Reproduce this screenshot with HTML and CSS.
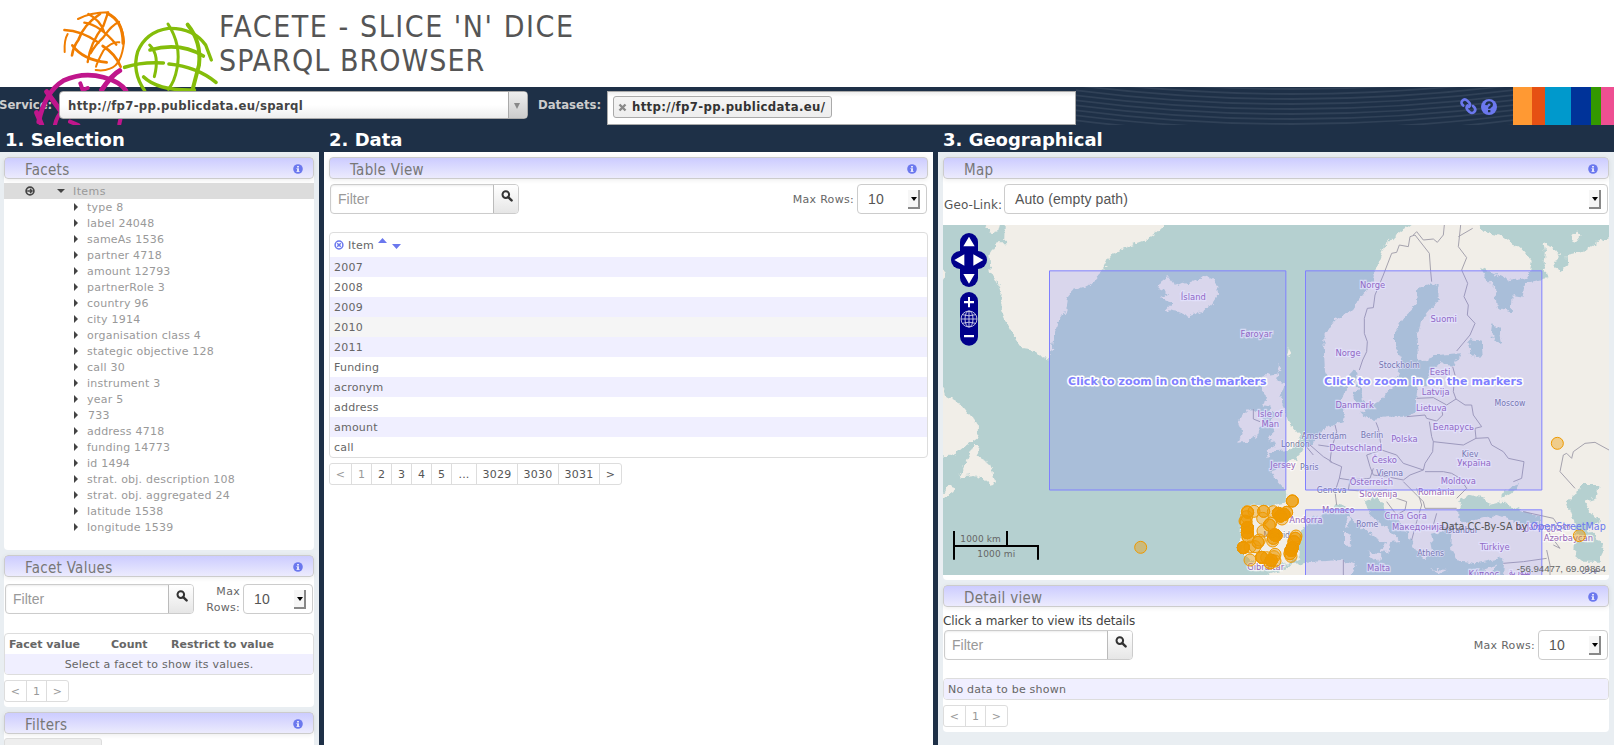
FILE: index.html
```html
<!DOCTYPE html>
<html lang="en">
<head>
<meta charset="utf-8">
<title>Facete</title>
<link rel="stylesheet" href="styles.css">
</head>
<body>
<svg width="0" height="0" class="defs">
  <symbol id="info" viewBox="0 0 10 10"><circle cx="5" cy="5" r="4.8" fill="#6b78ee"/><path d="M4 2h2v1.4H4zM3.4 4.2H6v3h.7v.9H3.4v-.9H4V5.1h-.6z" fill="#e3e3fc"/></symbol>
  <symbol id="search" viewBox="0 0 12 12"><circle cx="4.8" cy="4.6" r="3.3" fill="none" stroke="#333" stroke-width="2"/><path d="M7.2 7.2L10.6 10.4" stroke="#333" stroke-width="2.4" stroke-linecap="round"/></symbol>
</svg>
<header class="banner">
  <h1><span class="l1">FACETE - SLICE 'N' DICE</span><span class="l2">SPARQL BROWSER</span></h1>
</header>
<svg class="logo" viewBox="0 0 660 375" width="220" height="125" fill="none" stroke-linecap="round" stroke-linejoin="round">
  <g stroke="#f07d00">
    <path stroke-width="6" d="M174 57Q210 38 265 37M262 40Q308 62 312 125Q305 195 270 206Q250 214 227 210"/>
    <path stroke-width="9" d="M262 40Q310 62 309 130"/>
    <path stroke-width="8" d="M240 42Q190 75 175 120Q160 140 156 166"/>
    <path stroke-width="7" d="M250 78Q210 130 203 186M250 78L264 38M297 66Q275 75 250 112Q225 135 212 160M133 90Q185 92 236 128M193 68Q240 75 289 134M205 42Q240 60 252 95"/>
    <path stroke-width="8" d="M157 136Q190 180 260 187M248 138Q285 160 302 200"/>
    <path stroke-width="6" d="M298 127Q275 124 250 152Q232 185 228 200M143 102Q132 120 134 156"/>
  </g>
  <g stroke="#84bd0a">
    <path stroke-width="10" d="M374 272Q335 215 353 155Q378 95 445 85Q520 83 557 135L574 180"/>
    <path stroke-width="12" d="M503 74Q545 125 537 195L518 268"/>
    <path stroke-width="9" d="M444 72Q485 135 471 205Q464 245 445 268M389 135Q420 165 403 230"/>
    <path stroke-width="11" d="M314 202Q365 185 430 189M390 150Q480 125 550 168M447 192Q530 200 588 247M371 231Q415 273 523 270"/>
  </g>
  <g stroke="#c0168c">
    <path stroke-width="14" d="M56 366Q75 275 130 242Q190 215 250 232Q300 245 318 272"/>
    <path stroke-width="15" d="M299 212Q275 225 245 270M50 338L65 374M80 275L120 330"/>
    <path stroke-width="12" d="M181 250L188 270L203 264M105 374Q110 350 125 335M298 372L303 350M150 365L175 375"/>
  </g>
</svg>
<nav class="navbar">
  <label class="nl">Service:</label>
  <div class="combo"><span>http://fp7-pp.publicdata.eu/sparql</span><i><b></b></i></div>
  <label class="nl ds">Datasets:</label>
  <div class="multi"><span class="chip"><svg width="9" height="9" viewBox="0 0 9 9"><path d="M1.500 1.500l6 6M7.500 1.500l-6 6" stroke="#8a8a8a" stroke-width="2.400"/></svg>http://fp7-pp.publicdata.eu/</span></div>
  <div class="pattern">
    <svg class="waves" width="437" height="38" viewBox="0 0 437 38"><g id="waves" fill="none" stroke="#304157" stroke-width="1.8"></g></svg>
    <svg class="links" width="40" height="20" viewBox="0 0 40 20">
      <g fill="none" stroke="#6b78ee" stroke-width="2.600" stroke-linecap="round"><path d="M4.200 8.600Q1.200 6 3.400 3.600T8.200 3.600L10.200 5.600Q12 8 10 10"/><path d="M8.600 8.400Q6.600 10.400 8.400 12.800L10.600 15Q13 17 15.200 15T15.400 10.400L14 9"/></g>
      <circle cx="30" cy="10" r="8" fill="#6b78ee"/><path d="M27.300 8.100Q27.500 5.400 30.100 5.400T32.800 7.800Q32.800 9.100 31.400 9.800Q30.200 10.400 30.200 11.700M30.200 13.100V15.300" fill="none" stroke="#1e3047" stroke-width="2.400"/>
    </svg>
  </div>
  <div class="stripes"><i class="s1"></i><i class="s2"></i><i class="s3"></i><i class="s4"></i><i class="s5"></i><i class="s6"></i></div>
</nav>
<main class="cols">
  <section class="col left">
    <h2>1. Selection</h2>
    <div class="body">
      <div class="panel facets">
        <h3>Facets<svg><use href="#info"/></svg></h3>
        <div class="items"><svg width="10" height="10" viewBox="0 0 10 10"><circle cx="5" cy="5" r="3.900" fill="#ddd" stroke="#444" stroke-width="1.700"/><path d="M2.200 5h4.600M5 2.900L7.100 5L5 7.100" fill="none" stroke="#444" stroke-width="1.400"/></svg><b class="down"></b><span>Items</span></div>
        <ul><li>type 8</li><li>label 24048</li><li>sameAs 1536</li><li>partner 4718</li><li>amount 12793</li><li>partnerRole 3</li><li>country 96</li><li>city 1914</li><li>organisation class 4</li><li>stategic objective 128</li><li>call 30</li><li>instrument 3</li><li>year 5</li><li class="anon">733</li><li>address 4718</li><li>funding 14773</li><li>id 1494</li><li>strat. obj. description 108</li><li>strat. obj. aggregated 24</li><li>latitude 1538</li><li>longitude 1539</li></ul>
      </div>
      <div class="panel values">
        <h3>Facet Values<svg><use href="#info"/></svg></h3>
        <div class="tools"><div class="filter"><span>Filter</span><i><svg><use href="#search"/></svg></i></div><label>Max<br>Rows:</label><div class="select">10<i></i></div></div>
        <div class="grid"><div class="head"><b class="c1">Facet value</b><b class="c2">Count</b><b>Restrict to value</b></div><div class="row odd mid">Select a facet to show its values.</div></div>
        <div class="pager off"><a>&lt;</a><a>1</a><a>&gt;</a></div>
      </div>
      <div class="panel filters">
        <h3>Filters<svg><use href="#info"/></svg></h3>
        <div class="btn"></div>
      </div>
    </div>
  </section>
  <section class="col middle">
    <h2>2. Data</h2>
    <div class="body">
      <div class="panel">
        <h3>Table View<svg><use href="#info"/></svg></h3>
        <div class="tools"><div class="filter"><span>Filter</span><i><svg><use href="#search"/></svg></i></div><label>Max Rows:</label><div class="select">10<i></i></div></div>
        <div class="grid">
          <div class="sorthead"><svg width="10" height="10" viewBox="0 0 10 10"><circle cx="5" cy="5" r="3.900" fill="none" stroke="#6b78ee" stroke-width="1.500"/><path d="M3.200 3.200l3.600 3.600M6.800 3.200L3.200 6.800" stroke="#6b78ee" stroke-width="1.500"/></svg><span>Item</span><svg class="sort" width="24" height="14" viewBox="0 0 24 14"><path d="M0 6L4.500 1L9 6zM14 7h9l-4.500 5z" fill="#6b78ee"/></svg></div>
          <div class="row odd">2007</div><div class="row">2008</div><div class="row odd">2009</div><div class="row hover">2010</div><div class="row odd">2011</div><div class="row">Funding</div><div class="row odd">acronym</div><div class="row">address</div><div class="row odd">amount</div><div class="row">call</div>
        </div>
        <div class="pager"><a class="dim">&lt;</a><a class="dim">1</a><a>2</a><a>3</a><a>4</a><a>5</a><a class="w25">...</a><a class="w41">3029</a><a class="w41">3030</a><a class="w41">3031</a><a>&gt;</a></div>
      </div>
    </div>
  </section>
  <section class="col right">
    <h2>3. Geographical</h2>
    <div class="body">
      <div class="panel mapp">
        <h3>Map<svg><use href="#info"/></svg></h3>
        <div class="geo"><label>Geo-Link:</label><div class="select wide">Auto (empty path)<i></i></div></div>
        <svg class="map" width="666" height="350" viewBox="39 30 1998 1050">
          <defs><filter id="rough" x="0" y="0" width="1" height="1"><feTurbulence type="fractalNoise" baseFrequency="0.05" numOctaves="3" seed="4"/><feDisplacementMap in="SourceGraphic" scale="22" xChannelSelector="R" yChannelSelector="G"/></filter></defs>
          <rect x="0" y="0" width="2040" height="1080" fill="#b5d0d0"/>
          <g filter="url(#rough)">
            <rect x="0" y="0" width="2080" height="1110" fill="#b5d0d0"/>
            <g fill="#f1eee8">
              <path d="M228 20H710L690 42L665 62L640 78L600 92L562 108L548 110L543 92L550 112L530 140L518 165L500 190L470 213L430 225L412 248L405 290L385 320L372 360L366 400L357 433L340 430L318 408L280 403L262 378L240 345L222 305L210 270L215 240L205 210L182 170L178 120L200 85L225 85Z"/>
              <path d="M160 20H212L205 48L185 55ZM30 485L50 545L95 570L122 602L147 635L145 665L110 690L75 718L30 722ZM132 690L150 690L140 725L180 745L190 770L198 800L190 812L160 790L130 780L88 785L100 760ZM30 855L45 825L62 805L75 825ZM30 160L50 175L39 195H30Z"/>
              <path d="M690 200L712 183L732 210L750 205L760 200L775 205L800 195L820 180L845 190L862 215L864 245L840 275L800 295L775 304L745 290L710 285L728 265L690 250L718 235L685 220Z"/>
              <path d="M968 580L988 590L998 620L985 660L950 680L925 683L935 655L925 620L940 595ZM1048 450L1052 462L1040 472ZM1076 400L1084 415L1072 425Z"/>
              <path d="M1015 480L1048 475L1042 500L1066 505L1050 550L1070 590L1080 625L1100 650L1115 665L1100 695L1080 705L1040 708L1005 725L1012 705L1040 690L1015 675L1030 650L1022 620L1035 600L1020 575L1000 570L1008 540L995 520L1008 500L985 490Z"/>
            </g>
            <g transform="translate(1020 0)">
              <path fill="#f1eee8" d="M0 770L40 760L52 735L80 738L100 700L125 690L150 655L175 635L200 628L222 620L225 590L215 560L225 520L260 495L265 520L250 545L262 580L280 600L310 612L360 605L410 605L440 590L438 560L442 520L465 510L480 500L475 470L510 445L555 450L560 435L570 415L500 420L445 440L440 370L450 320L480 285L510 250L505 215L480 205L445 220L440 270L400 310L375 350L375 395L395 430L385 480L365 520L330 560L295 570L280 555L270 520L262 480L250 465L220 500L180 505L165 470L160 370L190 320L250 280L300 210L325 140L340 100L370 65L430 20H620L640 50L700 65L750 100L785 140L780 170L765 190L720 198L670 175L630 155L650 190L675 215L680 275L722 290L725 240L758 245L765 205L830 190L820 150L825 110L820 85L850 95L870 120L850 155L875 165L892 150L890 120L940 110L980 80L1060 60V1110H-20L0 1075L50 1060L50 1040L30 1050L-30 1050L-75 1025L-90 990L-85 880L-70 868L0 872L50 862L52 830L25 800Z"/>
              <path fill="#f1eee8" d="M905 60L920 45L935 60L920 80L902 75ZM265 575L290 565L285 595L262 590Z"/>
              <g fill="#b5d0d0">
                <path d="M60 1045L85 1030L90 960L110 925L165 890L195 870L225 875L245 910L300 960L345 985L335 1010L355 1015L360 985L395 980L350 940L300 900L285 860L320 845L345 880L400 930L420 970L440 1010L470 1035L490 1010L480 960L520 950L545 945L540 1000L560 1035L620 1045L690 1030L705 1045L700 1110H230L260 1050L215 1035L130 1040L-30 1068L-20 1052Z"/>
                <path d="M565 885L575 850L600 840L640 850L660 870L700 860L750 885L810 905L815 930L750 925L680 900L620 915L580 925L565 905ZM690 840L750 800L740 825L700 850ZM890 860L925 830L930 810L985 810L980 850L945 860L960 890L990 920L950 940L975 960L1000 1000L990 1040L940 1040L915 1020L920 960L905 900Z"/>
                <path d="M595 375L635 380L638 420L605 425ZM670 325L690 345L697 390L682 385L665 360Z"/>
              </g>
              <path fill="#f1eee8" d="M232 900L240 910L235 935L226 930ZM225 950L242 960L238 995L225 995ZM290 1010L335 1015L325 1040ZM480 1060L530 1065L510 1075ZM640 1060L680 1050L660 1078Z"/>
            </g>
          </g>
          <g transform="translate(1020 0)" fill="none" stroke="#a5a2ad" stroke-width="3" stroke-linejoin="round">
            <path d="M268 465L278 435L290 410L292 380L283 355V310L292 280L310 278L315 240L340 180L365 115L380 112L388 90L415 95L420 65L435 60L478 115L482 170L485 200M430 60L440 50L460 75L490 72L502 82L520 60L523 30M572 30L565 95L590 128L575 165L593 205L582 245L595 270L592 300L615 325L600 360L560 408M565 65L608 40M548 455L555 480L550 530L558 552L530 570L490 548L440 550M515 580L518 600L500 618L470 610L465 600L410 605M558 552L585 570L605 570L610 600L635 635L615 640L618 670L580 690L490 680L485 665L478 620M490 680L488 710L465 745L460 765L400 745L380 720L335 705L325 640L318 622M618 670L655 668L665 690L700 710L715 730L762 740L755 790L730 800M465 770L520 770L545 775L570 790L590 820L560 850M460 765L420 780L400 795L350 785L310 780L300 755L290 720L335 705M195 630L200 650L185 700L180 740L215 755L208 790L240 795L300 790L310 760M120 690L160 725L185 740M105 690L130 720M145 690L180 695M208 790L195 830L200 870M240 795L235 825L300 830L350 825L380 850L410 860L405 885L380 900L350 860M400 800L430 830L460 860L465 880L560 880M440 820L455 870L440 920L425 975M500 895L490 930L530 940L560 925M915 820L870 770L880 720L890 715L905 730L910 710L945 685L975 682L1017 705M760 890L850 910L870 940L905 935M830 930L840 960L870 1000L850 990M830 1005L840 1050V1080M700 1045L760 1040L830 1030M220 1035V1080"/>
            <path d="M-50 582V612L-30 620"/>
          </g>
          <g class="country" id="countries"></g>
          <g class="city" id="cities"></g>
          <g fill="#7e78ff" fill-opacity=".2" stroke="#8080ff" stroke-width="3"><path d="M358.500 167.500H1067.500V825H358.500ZM1126.500 167.500H1835.500V825H1126.500ZM1126.500 1090V884.500H1835.500V1090"/></g>
          <g class="click"><text x="712" y="510">Click to zoom in on the markers</text><text x="1480" y="510">Click to zoom in on the markers</text></g>
          <g id="markers" fill="#e90" fill-opacity=".4" stroke="#e90" stroke-width="3"></g>
          <g fill="#00008b"><rect x="90" y="54" width="54" height="162" rx="27"/><rect x="63" y="108" width="108" height="54" rx="27"/><rect x="90" y="231" width="54" height="161" rx="27"/></g>
          <path fill="#fff" d="M117 65L134 94H100ZM117 206L134 177H100ZM73 135L103 118V152ZM160 135L130 118V152ZM102 258H114V246H120V258H132V265H120V277H114V265H102ZM102 360H132V367H102Z"/>
          <g fill="none" stroke="#dde" stroke-width="2.500"><circle cx="117" cy="312" r="24"/><ellipse cx="117" cy="312" rx="12" ry="24"/><path d="M93 312H141M117 288V336M97 299Q117 306 137 299M97 325Q117 318 137 325"/></g>
          <path d="M72 948V1034M231 948V993M72 993H324M324 990V1034" fill="none" stroke="#000" stroke-width="6"/>
          <g class="scale"><text x="91" y="980">1000 km</text><text x="142" y="1026">1000 mi</text></g>
          <text class="attr" x="1534" y="944">Data CC-By-SA by <tspan>OpenStreetMap</tspan></text>
          <text class="coords" x="2028" y="1070">-56.94477, 69.09864</text>
        </svg>
      </div>
      <div class="panel detail">
        <h3>Detail view<svg><use href="#info"/></svg></h3>
        <p>Click a marker to view its details</p>
        <div class="tools"><div class="filter"><span>Filter</span><i><svg><use href="#search"/></svg></i></div><label>Max Rows:</label><div class="select">10<i></i></div></div>
        <div class="grid"><div class="row odd">No data to be shown</div></div>
        <div class="pager off"><a>&lt;</a><a>1</a><a>&gt;</a></div>
      </div>
    </div>
  </section>
</main>
<script src="map.js"></script>
</body>
</html>
```
FILE: styles.css
```css
* { box-sizing: border-box; }
body { margin: 0; height: 745px; overflow: hidden; position: relative; background: #1e3047; color: #666; font: 11px/16px "DejaVu Sans", sans-serif; letter-spacing: .22px; }
h1, h2, h3, p, ul { margin: 0; padding: 0; font-weight: 400; }
i { font-style: normal; }
.defs { position: absolute; }
.banner { height: 87px; background: #fff; padding: 10px 0 0 219px; }
h1 { font: 30px/34px "DejaVu Sans Condensed", sans-serif; color: #555; }
h1 span { display: block; }
.l1 { letter-spacing: 1.550px; }
.l2 { letter-spacing: 1.050px; }
.logo { position: absolute; left: 20px; top: 0; z-index: 1; }
.navbar { height: 38px; display: flex; align-items: flex-start; }
.nl { width: 60px; padding-top: 9px; margin-left: -1px; font: bold 13px/18px "DejaVu Sans Condensed", sans-serif; letter-spacing: 0; color: #ccc; }
.combo { position: relative; z-index: 2; width: 469px; height: 28px; margin-top: 4px; display: flex; border: 1px solid #aaa; border-radius: 4px; background: linear-gradient(#fff 50%, #eee); font: bold 13px/27px "DejaVu Sans Condensed", sans-serif; letter-spacing: .3px; color: #444; overflow: hidden; }
.combo span { flex: 1; padding-left: 8px; }
.combo i { width: 19px; border-left: 1px solid #aaa; background: linear-gradient(#eee, #ccc); }
.combo b { display: block; width: 0; margin: 11px 0 0 5px; border: 3px solid transparent; border-top: 6px solid #888; border-bottom: 0; }
.ds { width: 69px; margin-left: 10px; }
.multi { width: 469px; height: 34px; margin-top: 4px; padding: 4px 5px; border: 1px solid #aaa; background: linear-gradient(#eee, #fff 15%); }
.chip { display: flex; align-items: center; width: 219px; height: 22px; padding-left: 4px; gap: 5px; border: 1px solid #aaa; border-radius: 3px; background: linear-gradient(#f4f4f4, #eee); font: bold 13px/20px "DejaVu Sans Condensed", sans-serif; letter-spacing: .35px; color: #333; white-space: nowrap; }
.pattern { width: 437px; height: 38px; position: relative; }
.waves { display: block; }
.links { position: absolute; left: 383px; top: 10px; }
.stripes { display: flex; height: 38px; flex: 1; }
.s1 { width: 19px; background: #f93; } .s2 { width: 13px; background: #e65013; } .s3 { width: 26px; background: #09c; }
.s4 { width: 20px; background: #039; } .s5 { width: 10px; background: #390; } .s6 { flex: 1; background: #ee4f92; }
.cols { display: grid; grid-template-columns: 319px 609px 676px; column-gap: 5px; height: 620px; }
.col { display: flex; flex-direction: column; min-width: 0; }
h2 { height: 27px; padding-left: 5px; font: bold 18px/30px "DejaVu Sans", sans-serif; letter-spacing: 0; color: #fff; }
.body { flex: 1; padding: 5px 5px 0 4px; background: #e9eef2; display: flex; flex-direction: column; gap: 5px; min-height: 0; }
.middle .body { background: #fff; padding-left: 5px; }
.right .body { padding-left: 5px; }
.panel { background: #fff; border-radius: 4px; flex: none; }
h3 { height: 22px; display: flex; align-items: center; justify-content: space-between; padding: 3px 10px 0 20px; border: 1px solid #ccc; border-radius: 4px; background: linear-gradient(#ccf, #ecebfd); box-shadow: 0 1px 5px rgba(0,0,0,.08); font: 15px/20px "DejaVu Sans Condensed", sans-serif; letter-spacing: .3px; color: #777; }
h3 svg { width: 10px; height: 10px; margin-top: -1px; }
.facets { height: 393px; }
.items { height: 16px; margin-top: 4px; background: #dcdcdc; display: flex; align-items: center; padding-left: 21px; color: #999; letter-spacing: .4px; }
.items span { padding-top: 1px; }
.down { border: 4px solid transparent; border-top: 4px solid #444; border-bottom: 0; margin: 0 8px 0 22px; }
ul { list-style: none; color: #999; }
li { height: 16px; display: flex; align-items: center; padding-left: 70px; line-height: 14px; padding-top: 1px; }
li::before { content: ""; border: 4px solid transparent; border-left: 4px solid #444; border-right: 0; margin: -1px 9px 0 0; }
.anon::before { margin-right: 10px; }
.values { height: 152px; }
.tools { display: flex; align-items: center; padding: 5px 1px 0; height: 35px; }
.filter { display: flex; width: 189px; height: 30px; border: 1px solid #ccc; border-radius: 4px; box-shadow: inset 0 1px 2px rgba(0,0,0,.08); font: 14px/29px "Liberation Sans", sans-serif; letter-spacing: 0; color: #999; overflow: hidden; }
.filter span { width: 162px; padding-left: 7px; }
.filter i { flex: 1; border-left: 1px solid #bbb; background: linear-gradient(#fff, #e6e6e6); display: flex; padding: 5px 0 0 7px; }
.filter svg { width: 12px; height: 12px; }
.tools label { margin-left: auto; text-align: right; padding: 1px 3px 0 0; letter-spacing: .3px; }
.select { width: 70px; height: 30px; border: 1px solid #ccc; border-radius: 4px; background: #fff; display: flex; justify-content: space-between; padding: 5px 6px 4px 10px; font: 14px/18px "Liberation Sans", sans-serif; letter-spacing: .1px; color: #555; }
.select i { width: 12px; height: 19px; background: #f6f6f6; border-right: 2px solid #888; border-bottom: 2px solid #888; padding: 7px 0 0 3px; }
.select i::before { content: ""; display: block; width: 0; border: 3px solid transparent; border-top: 4px solid #000; border-bottom: 0; }
.grid { margin-top: 18px; border: 1px solid #ddd; border-radius: 4px; overflow: hidden; }
.values .tools { height: 37px; padding-top: 7px; }
.values .grid { margin-top: 19px; }
.head { display: flex; height: 20px; line-height: 21px; padding-left: 4px; letter-spacing: 0; }
.c1 { width: 102px; } .c2 { width: 60px; }
.row { height: 20px; line-height: 22px; padding-left: 4px; }
.odd { background: #f0efff; }
.hover { background: #f5f5f5; }
.mid { text-align: center; padding: 0; line-height: 21px; }
.sorthead { height: 24px; display: flex; align-items: center; padding-left: 4px; }
.sorthead span { padding: 1px 4px 0; }
.sort { margin-bottom: 2px; }
.pager { display: flex; margin-top: 5px; width: max-content; border: 1px solid #ddd; border-radius: 3px; height: 22px; line-height: 21px; color: #555; }
.pager a { width: 20px; text-align: center; border-left: 1px solid #ddd; }
.pager a:first-child { width: 21px; border: 0; }
.pager a:last-child { width: 22px; }
.pager .w25 { width: 25px; } .pager .w41 { width: 41px; }
.off, .pager .dim { color: #999; }
.btn { width: 98px; height: 20px; margin-top: 4px; background: #eee; border: 1px solid #ddd; border-radius: 3px; }
.middle .panel { border-radius: 0; }
.mapp { height: 423px; }
.geo { display: flex; height: 46px; padding: 5px 1px 0; font-size: 12px; letter-spacing: 0; color: #555; }
.geo label { width: 60px; padding-top: 13px; letter-spacing: .1px; }
.wide { width: 604px; }
.map { display: block; }
.country, .city { font-family: "DejaVu Sans Condensed", sans-serif; letter-spacing: 0; text-anchor: middle; paint-order: stroke; stroke: #fff; stroke-opacity: .75; stroke-width: 7px; }
.country { font-size: 28px; fill: #9665b5; }
.city { font-size: 26px; fill: #74769a; stroke-width: 4px; }
.click { font: bold 33px "DejaVu Sans", sans-serif; letter-spacing: .2px; text-anchor: middle; fill: #8080ff; paint-order: stroke; stroke: #fff; stroke-width: 9px; stroke-linejoin: round; }
.scale { font-size: 27px; letter-spacing: .4px; fill: #666; }
.attr { font: 32px "DejaVu Sans Condensed", sans-serif; letter-spacing: .1px; fill: #555; }
.attr tspan { fill: #6b78ee; }
.coords { font: 29px "Liberation Sans", sans-serif; letter-spacing: 0; text-anchor: end; fill: #666; }
.detail { height: 147px; }
.detail p { height: 23px; padding-top: 5px; font-size: 12px; line-height: 18px; letter-spacing: -.1px; color: #444; }
.detail .tools { padding-top: 0; height: 30px; }
.detail .row { line-height: 21px; }
```
FILE: map.js
```js
const put = (id, rows) => {
  document.getElementById(id).innerHTML = rows.map(([x, y, t]) => `<text x="${x}" y="${y}">${t}</text>`).join("");
};
put("countries", [
  [790, 254, "Ísland"], [979, 366, "Føroyar"], [1020, 606, "Isle of"], [1021, 636, "Man"], [1059, 760, "Jersey"],
  [1007, 1064, "Gibraltar"], [1328, 219, "Norge"], [1254, 422, "Norge"], [1541, 322, "Suomi"], [1530, 480, "Eesti"],
  [1517, 541, "Latvija"], [1274, 578, "Danmark"], [1504, 587, "Lietuva"], [1570, 644, "Беларусь"], [1423, 681, "Polska"],
  [1277, 709, "Deutschland"], [1363, 744, "Česko"], [1632, 752, "Україна"], [1585, 808, "Moldova"], [1324, 810, "Österreich"],
  [1345, 845, "Slovenija"], [1519, 840, "România"], [1225, 895, "Monaco"], [1128, 923, "Andorra"], [1427, 911, "Crna Gora"],
  [1464, 944, "Македонија"], [1840, 944, "საქართველო"], [1915, 977, "Azərbaycan"], [1694, 1004, "Türkiye"], [1346, 1069, "Malta"],
  [1662, 1086, "Κύπρος"], [1770, 1080, "سورية"]
]);
put("cities", [
  [1408, 459, "Stockholm"], [1740, 574, "Moscow"], [1182, 672, "Amsterdam"], [1326, 668, "Berlin"], [1096, 696, "London"],
  [1138, 766, "Paris"], [1620, 725, "Kiev"], [1379, 783, "Vienna"], [1205, 834, "Geneva"], [1312, 936, "Rome"],
  [1594, 954, "İstanbul"], [1502, 1023, "Athens"], [1040, 970, "Madrid"], [1980, 1070, "تهران"]
]);

// x, y, number of coincident points
const spots = [
  [632, 997, 1], [1882, 685, 1], [1948, 962, 1], [1087, 858, 3],
  [953, 892, 2], [972, 889, 1], [1001, 889, 2], [1030, 890, 1], [950, 905, 1], [948, 920, 2], [952, 938, 6], [952, 953, 5], [954, 966, 2],
  [940, 998, 6], [960, 996, 1], [984, 982, 2], [975, 995, 1], [988, 975, 1], [998, 910, 1], [999, 948, 1], [1018, 930, 2], [1022, 925, 1],
  [1045, 895, 5], [1052, 903, 6], [1062, 898, 5], [1070, 892, 2], [1056, 912, 1], [1035, 960, 6], [1038, 962, 5], [1030, 970, 2], [1028, 978, 1],
  [1098, 963, 1], [1096, 970, 2], [1092, 980, 3], [1087, 998, 6], [1083, 1006, 6], [1080, 1016, 2], [1083, 1024, 1], [1035, 1018, 1], [1032, 1025, 1],
  [995, 1027, 4], [1010, 1028, 1], [960, 1035, 1], [1024, 1036, 4], [1020, 1044, 2], [1035, 1038, 1], [952, 890, 1], [945, 918, 1]
];
document.getElementById("markers").innerHTML = spots
  .map(([x, y, n]) => `<circle cx="${x}" cy="${y}" r="18"/>`.repeat(n)).join("");

// concentric arcs of the toolbar background
let d = "";
for (let k = -60; k < 46; k += 5) d += `M-10 ${k - 8}Q215 ${k + 22} 446 ${k - 8}`;
document.getElementById("waves").innerHTML = `<path d="${d}"/>`;
```
